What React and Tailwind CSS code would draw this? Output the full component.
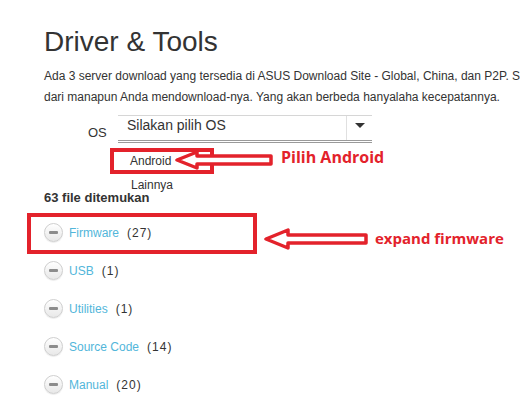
import React from 'react';

const items = [
    { name: 'Firmware', count: 27 },
    { name: 'USB', count: 1 },
    { name: 'Utilities', count: 1 },
    { name: 'Source Code', count: 14 },
    { name: 'Manual', count: 20 },
];

const MinusIcon = () => (
    <span className="w-[19px] h-[19px] rounded-full border border-[#cfcfcf] bg-gradient-to-b from-[#ffffff] to-[#e8e8e8] shadow-[0_1px_1px_rgba(0,0,0,0.08)] flex items-center justify-center shrink-0">
        <span className="w-[9px] h-[3px] bg-[#8c8c8c] rounded-[1px]" />
    </span>
);

const Arrow = ({ className, width, height }) => (
    <svg className={className} width={width} height={height} viewBox={`0 0 ${width} ${height}`}>
        <polygon
            points={`2,${height / 2} ${height + 2},2 ${height + 2},${height / 2 - 4} ${width - 2},${height / 2 - 4} ${width - 2},${height / 2 + 4} ${height + 2},${height / 2 + 4} ${height + 2},${height - 2}`}
            fill="white"
            stroke="#e3222b"
            strokeWidth="3.5"
            strokeLinejoin="round"
        />
    </svg>
);

export default function App() {
    return (
        <div className="relative w-[520px] h-[415px] overflow-hidden bg-white text-[#333] font-['Liberation_Sans',Arial,sans-serif]">
            <div className="pl-[44px] pt-[26px]">
                <h1 className="text-[28px] leading-[32px] text-[#333]">Driver &amp; Tools</h1>
                <div className="mt-[8px] text-[12px] leading-[21px] whitespace-nowrap">
                    <p>Ada 3 server download yang tersedia di ASUS Download Site - Global, China, dan P2P. Silakan</p>
                    <p>dari manapun Anda mendownload-nya. Yang akan berbeda hanyalaha kecepatannya.</p>
                </div>

                <div className="mt-[7px] flex items-start">
                    <span className="w-[74px] pl-[44px] pt-[10px] text-[13px] leading-[16px]">OS</span>
                    <div className="w-[254px] h-[28px] border-t border-[#d6d6d6] border-b-[3px] border-double border-b-[#9a9a9a] flex items-stretch">
                        <span className="flex-1 pl-[9px] text-[14px] leading-[18px]">Silakan pilih OS</span>
                        <span className="w-[26px] border-l border-[#e0e0e0] flex items-start justify-center pt-[7px]">
                            <span className="w-0 h-0 border-l-[5px] border-r-[5px] border-t-[5px] border-l-transparent border-r-transparent border-t-[#333]" />
                        </span>
                    </div>
                </div>

                <div className="pl-[86px] mt-[6px] text-[12px] leading-[24px]">
                    <p>Android</p>
                    <p className="pl-px">Lainnya</p>
                </div>

                <p className="-mt-[7px] text-[13px] leading-[16px] font-bold">63 file ditemukan</p>

                <ul className="mt-[17px] flex flex-col gap-[19px]">
                    {items.map((item) => (
                        <li key={item.name} className="flex items-center h-[19px] text-[12px]">
                            <MinusIcon />
                            <span className="ml-[6px] text-[#52b6da]">{item.name}</span>
                            <span className="ml-[8px] tracking-[1px] text-[#333]">({item.count})</span>
                        </li>
                    ))}
                </ul>
            </div>

            {/* annotations */}
            <div className="absolute left-[110px] top-[148px] w-[104px] h-[26px] border-[4px] border-[#e3222b]" />
            <Arrow className="absolute left-[175px] top-[150px]" width={98} height={20} />
            <span className="absolute left-[281px] top-[147px] text-[16px] leading-[20px] font-bold text-[#e3222b] font-['Open_Sans',sans-serif]">Pilih Android</span>

            <div className="absolute left-[27px] top-[213px] w-[230px] h-[41px] border-[4px] border-[#e3222b]" />
            <Arrow className="absolute left-[264px] top-[228px]" width={104} height={22} />
            <span className="absolute left-[375px] top-[228px] text-[15px] leading-[20px] font-bold text-[#e3222b] font-['Open_Sans',sans-serif]">expand firmware</span>
        </div>
    );
}
